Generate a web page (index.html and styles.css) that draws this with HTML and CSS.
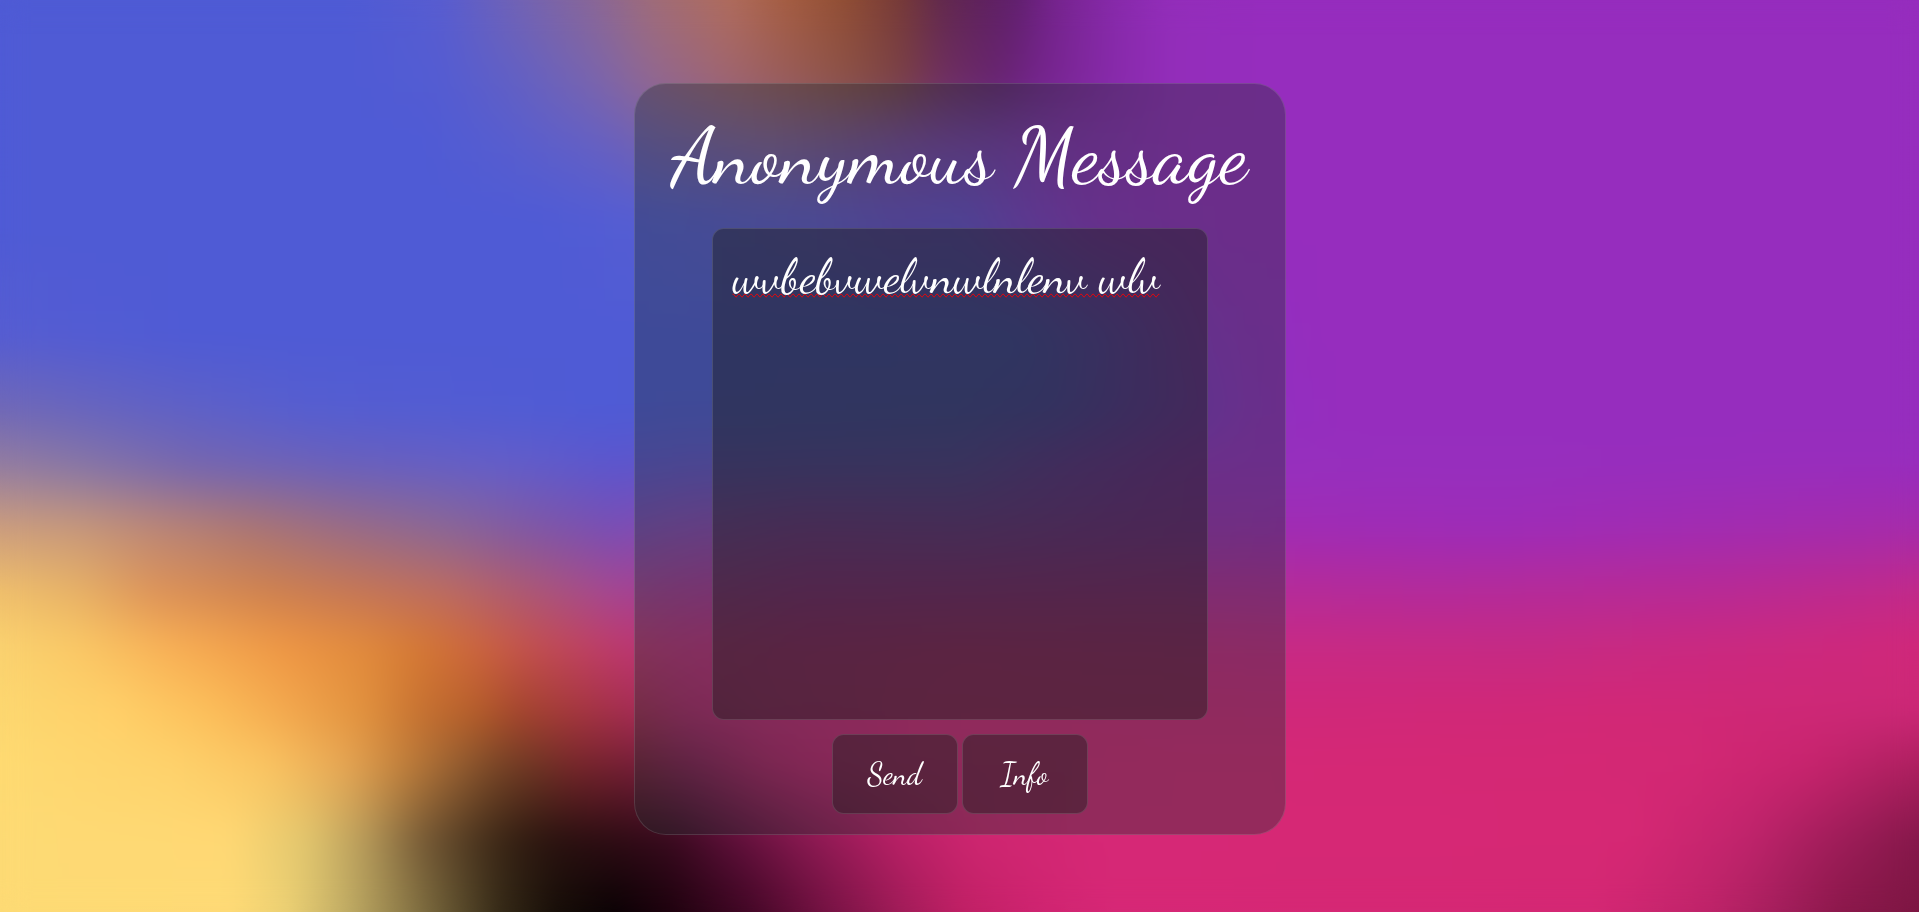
FILE: index.html
```html
<!DOCTYPE html>
<html lang="en">
<head>
<meta charset="utf-8">
<meta name="viewport" content="width=device-width, initial-scale=1">
<title>Anonymous Message</title>
<link rel="stylesheet" href="styles.css">
</head>
<body>
<div class="mesh" aria-hidden="true">
  <div class="band band-1"></div>
  <div class="band band-2"></div>
  <div class="band band-3"></div>
  <div class="band band-4"></div>
  <div class="band band-5"></div>
  <div class="band band-6"></div>
  <div class="band band-7"></div>
  <div class="band band-8"></div>
  <div class="band band-9"></div>
  <div class="band band-10"></div>
  <div class="band band-11"></div>
  <div class="band band-12"></div>
  <div class="band band-13"></div>
  <div class="band band-14"></div>
</div>
<main class="page">
  <form class="card">
    <h1 class="title"><label for="message">Anonymous Message</label></h1>
    <textarea class="message glass" id="message" name="message" spellcheck="false">wvbebvwelvnwlnlenv wlv</textarea>
    <div class="actions">
      <button class="action glass" type="button">Send</button>
      <button class="action glass" type="button">Info</button>
    </div>
  </form>
</main>
</body>
</html>
```

FILE: styles.css
```css
* { box-sizing: border-box; }

body {
  margin: 0;
  min-height: 100vh;
  overflow: hidden;
  background: #4f5bd5;
  color: #fff;
  font-family: "Dancing Script", "Liberation Serif", cursive;
}

/* Colour mesh: each band fades in over the one above it */
.mesh {
  position: fixed;
  inset: 0;
}

.mesh::after {
  content: "";
  position: absolute;
  inset: 0;
  backdrop-filter: blur(14px);
}

.band { position: absolute; inset: 0; }

.band-1 {
  background: linear-gradient(90deg, #4f5bd5 18%, rgb(88,93,208) 23%, rgb(114,99,180) 27%, rgb(138,103,150) 31%, rgb(160,108,120) 34%, rgb(176,108,92) 38%, rgb(165,93,65) 41%, rgb(145,78,52) 44%, rgb(118,58,56) 47%, rgb(98,42,76) 49%, rgb(95,34,92) 51%, rgb(97,32,110) 53%, rgb(118,36,142) 55%, rgb(135,42,170) 58%, rgb(147,46,186) 61%, rgb(150,45,190) 66%);
}
.band-2 {
  background: linear-gradient(90deg, #4f5bd5 18%, rgb(84,92,210) 23%, rgb(98,96,196) 27%, rgb(121,100,174) 31%, rgb(145,103,145) 34%, rgb(158,100,112) 38%, rgb(152,92,90) 41%, rgb(140,82,72) 44%, rgb(122,65,70) 47%, rgb(112,48,95) 49%, rgb(103,36,112) 52%, rgb(115,36,138) 54%, rgb(135,42,170) 58%, rgb(147,45,186) 61%, rgb(150,45,190) 66%);
  mask-image: linear-gradient(transparent 0, #000 9%);
}
.band-3 {
  background: linear-gradient(90deg, #4f5bd5 22%, rgb(86,93,208) 26%, rgb(100,96,196) 31%, rgb(114,97,177) 34%, rgb(130,97,154) 40%, rgb(122,84,150) 44%, rgb(120,68,162) 48%, rgb(118,62,168) 51%, rgb(135,48,178) 56%, rgb(150,45,190) 62%);
  mask-image: linear-gradient(transparent 9%, #000 16%);
}
.band-4 {
  background: linear-gradient(90deg, #4f5bd5 28%, rgb(87,94,210) 35%, rgb(98,90,205) 42%, rgb(106,78,202) 47%, rgb(103,78,205) 50%, rgb(123,65,200) 53%, rgb(142,50,192) 57%, rgb(150,45,190) 64%);
  mask-image: linear-gradient(transparent 16%, #000 24%);
}
.band-5 {
  background: linear-gradient(90deg, rgb(86,93,209) 0, #4f5bd5 10%, #4f5bd5 53%, rgb(108,72,205) 58%, rgb(142,50,192) 63%, rgb(150,45,190) 69%);
  mask-image: linear-gradient(transparent 25%, #000 37%);
}
.band-6 {
  background: linear-gradient(90deg, rgb(113,105,182) 0, rgb(98,98,195) 8%, rgb(86,94,208) 16%, #4f5bd5 31%, rgb(82,90,205) 50%, rgb(90,80,205) 55%, rgb(120,62,200) 60%, rgb(145,48,192) 65%, rgb(150,45,190) 70%);
  mask-image: linear-gradient(transparent 37%, #000 45%);
}
.band-7 {
  background: linear-gradient(90deg, rgb(148,125,160) 0, rgb(136,118,165) 4%, rgb(118,102,175) 10%, rgb(106,96,188) 18%, rgb(100,94,200) 26%, rgb(92,86,205) 32%, rgb(98,84,202) 36%, rgb(106,84,200) 50%, rgb(132,62,197) 56%, rgb(150,48,190) 62%, rgb(152,45,189) 100%);
  mask-image: linear-gradient(transparent 45%, #000 51%);
}
.band-8 {
  background: linear-gradient(90deg, rgb(205,158,125) 0, rgb(200,152,122) 4%, rgb(188,135,118) 8%, rgb(172,118,115) 13%, rgb(155,108,132) 18%, rgb(140,103,148) 23%, rgb(128,87,165) 28%, rgb(122,78,180) 32%, rgb(135,75,178) 35%, rgb(148,63,175) 42%, rgb(144,64,178) 50%, rgb(156,50,178) 60%, rgb(160,44,180) 67%, rgb(158,44,184) 78%, rgb(166,44,170) 100%);
  mask-image: linear-gradient(transparent 51%, #000 58%);
}
.band-9 {
  background: linear-gradient(90deg, rgb(240,192,108) 0, rgb(232,178,102) 4%, rgb(222,148,88) 8%, rgb(208,130,78) 14%, rgb(198,118,85) 19%, rgb(190,108,95) 23%, rgb(175,90,112) 27%, rgb(165,70,145) 32%, rgb(167,59,146) 35%, rgb(178,46,151) 42%, rgb(184,44,150) 60%, rgb(180,43,154) 75%, rgb(185,42,148) 90%, rgb(194,42,137) 100%);
  mask-image: linear-gradient(transparent 58%, #000 65%);
}
.band-10 {
  background: linear-gradient(90deg, rgb(250,210,112) 0, rgb(250,200,102) 4%, rgb(248,175,85) 9%, rgb(238,150,68) 15%, rgb(225,138,60) 19%, rgb(213,120,52) 22%, rgb(204,100,62) 25%, rgb(195,78,80) 28%, rgb(190,58,108) 32%, rgb(188,49,120) 35%, rgb(198,40,125) 42%, rgb(204,42,124) 50%, rgb(200,42,132) 67%, rgb(198,42,132) 80%, rgb(208,40,122) 100%);
  mask-image: linear-gradient(transparent 65%, #000 71%);
}
.band-11 {
  background: linear-gradient(90deg, rgb(252,215,112) 0, rgb(255,208,105) 6%, rgb(252,190,90) 11%, rgb(243,168,78) 15%, rgb(225,145,62) 19%, rgb(198,113,49) 22%, rgb(180,92,42) 25%, rgb(165,70,45) 27%, rgb(165,55,62) 30%, rgb(165,44,82) 33%, rgb(176,40,106) 36%, rgb(192,40,115) 40%, rgb(208,40,118) 50%, rgb(208,40,122) 67%, rgb(210,40,118) 85%, rgb(203,40,118) 100%);
  mask-image: linear-gradient(transparent 71%, #000 78%);
}
.band-12 {
  background: linear-gradient(90deg, rgb(254,218,114) 0, rgb(254,210,108) 9%, rgb(250,196,98) 14%, rgb(230,166,84) 18%, rgb(193,128,60) 21%, rgb(146,92,48) 24%, rgb(118,68,38) 26%, rgb(110,52,36) 28%, rgb(118,38,42) 30%, rgb(116,30,54) 33%, rgb(132,30,80) 36%, rgb(174,35,100) 40%, rgb(192,36,110) 43%, rgb(206,40,115) 48%, rgb(214,40,118) 62%, rgb(211,40,116) 88%, rgb(200,36,110) 94%, rgb(172,32,95) 100%);
  mask-image: linear-gradient(transparent 78%, #000 84%);
}
.band-13 {
  background: linear-gradient(90deg, rgb(253,218,116) 0, rgb(255,216,116) 12%, rgb(225,198,110) 16%, rgb(182,154,90) 19%, rgb(118,90,54) 22%, rgb(72,50,29) 25%, rgb(50,30,18) 27%, rgb(42,18,16) 29%, rgb(46,12,20) 32%, rgb(56,10,30) 35%, rgb(90,15,55) 38%, rgb(135,25,80) 42%, rgb(185,32,102) 47%, rgb(206,38,112) 51%, rgb(214,40,118) 57%, rgb(214,40,116) 85%, rgb(192,36,108) 91%, rgb(164,30,92) 95%, rgb(132,24,74) 100%);
  mask-image: linear-gradient(transparent 84%, #000 92%);
}
.band-14 {
  background: linear-gradient(90deg, rgb(253,218,116) 0, rgb(254,218,118) 12%, rgb(235,208,116) 15%, rgb(193,173,101) 18%, rgb(144,126,74) 21%, rgb(90,76,44) 24%, rgb(54,43,24) 26%, rgb(22,14,8) 29%, rgb(9,2,4) 32%, rgb(30,2,14) 35%, rgb(65,7,37) 39%, rgb(115,18,66) 43%, rgb(160,28,88) 47%, rgb(190,32,100) 50%, rgb(206,36,112) 54%, rgb(214,40,118) 58%, rgb(212,40,116) 83%, rgb(190,36,105) 89%, rgb(160,30,90) 93%, rgb(138,24,74) 96%, rgb(124,22,66) 100%);
  mask-image: linear-gradient(transparent 92%, #000 100%);
}

.page {
  position: relative;
  min-height: 100vh;
  display: flex;
  justify-content: center;
  align-items: center;
  padding-top: 6px;
}

.card {
  width: 652px;
  max-width: 100%;
  display: flex;
  flex-direction: column;
  align-items: center;
  padding: 24px 32px 20px;
  border: 1px solid rgba(255, 255, 255, 0.125);
  border-radius: 32px;
  background: rgba(35, 46, 50, 0.37);
}

.title {
  margin: 0 0 24px;
  font-size: 80px;
  line-height: 96px;
  font-weight: 400;
  text-align: center;
  white-space: nowrap;
}

.glass {
  border: 1px solid rgba(255, 255, 255, 0.125);
  border-radius: 12px;
  background: rgba(29, 28, 31, 0.45);
  color: #fff;
  font-family: inherit;
}

.message {
  display: block;
  width: 496px;
  max-width: 100%;
  height: 492px;
  margin-bottom: 14px;
  padding: 18px 20px;
  outline: none;
  resize: none;
  font-size: 48px;
  line-height: 60px;
  text-decoration: spelling-error;
}

.actions {
  display: flex;
  gap: 4px;
}

.action {
  width: 126px;
  height: 80px;
  padding: 0;
  font-size: 30px;
  line-height: 36px;
}
```
